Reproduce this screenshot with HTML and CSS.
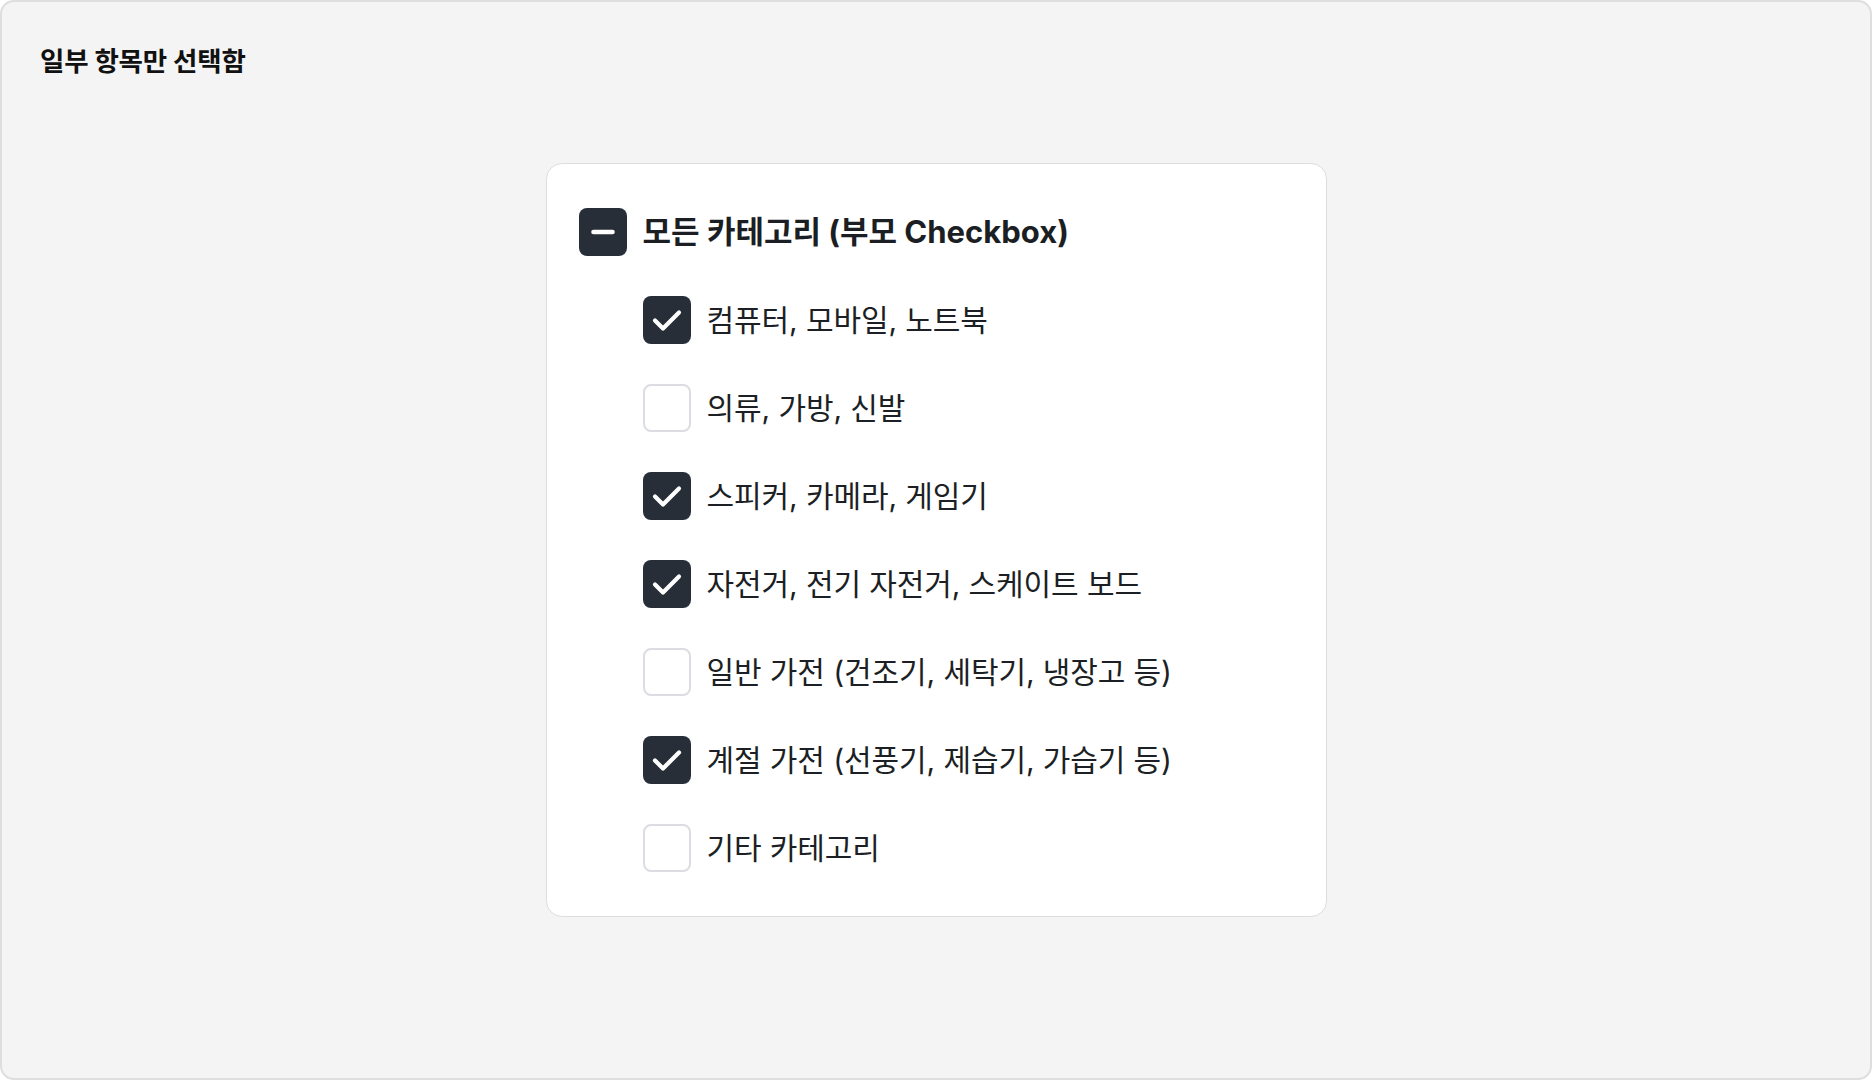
FILE: index.html
```html
<!DOCTYPE html>
<html lang="ko">
<head>
<meta charset="utf-8">
<title>일부 항목만 선택함</title>
<link rel="stylesheet" href="styles.css">
</head>
<body>
<div class="frame">
  <h1 class="title">일부 항목만 선택함</h1>
  <div class="card">
    <div class="row parent">
      <span class="box checked" aria-checked="mixed">
        <svg viewBox="0 0 48 48" width="48" height="48"><path d="M14.5 24 H33.5" /></svg>
      </span>
      <span class="label">모든 카테고리 (부모 Checkbox)</span>
    </div>
    <div class="children">
      <div class="row">
        <span class="box checked"><svg viewBox="0 0 48 48" width="48" height="48"><path d="M12 24.5 L20 32.5 L36 16.5" /></svg></span>
        <span class="label">컴퓨터, 모바일, 노트북</span>
      </div>
      <div class="row">
        <span class="box"></span>
        <span class="label">의류, 가방, 신발</span>
      </div>
      <div class="row">
        <span class="box checked"><svg viewBox="0 0 48 48" width="48" height="48"><path d="M12 24.5 L20 32.5 L36 16.5" /></svg></span>
        <span class="label">스피커, 카메라, 게임기</span>
      </div>
      <div class="row">
        <span class="box checked"><svg viewBox="0 0 48 48" width="48" height="48"><path d="M12 24.5 L20 32.5 L36 16.5" /></svg></span>
        <span class="label">자전거, 전기 자전거, 스케이트 보드</span>
      </div>
      <div class="row">
        <span class="box"></span>
        <span class="label">일반 가전 (건조기, 세탁기, 냉장고 등)</span>
      </div>
      <div class="row">
        <span class="box checked"><svg viewBox="0 0 48 48" width="48" height="48"><path d="M12 24.5 L20 32.5 L36 16.5" /></svg></span>
        <span class="label">계절 가전 (선풍기, 제습기, 가습기 등)</span>
      </div>
      <div class="row">
        <span class="box"></span>
        <span class="label">기타 카테고리</span>
      </div>
    </div>
  </div>
</div>
</body>
</html>
```
FILE: styles.css
```css
* { box-sizing: border-box; }
html, body { margin: 0; padding: 0; }
body {
  font-family: Inter, "Noto Sans CJK KR", sans-serif;
  background: #ffffff;
  color: #1f2329;
}
.frame {
  width: 1872px;
  height: 1080px;
  background: #f4f4f4;
  border: 2px solid #dedede;
  border-radius: 14px;
  padding: 39px 0 0 0;
  display: flex;
  flex-direction: column;
  align-items: center;
}
.title {
  align-self: flex-start;
  margin: 0 0 0 38px;
  font-size: 26.5px;
  line-height: 40px;
  font-weight: 700;
  color: #111111;
  letter-spacing: -0.2px;
}
.card {
  margin-top: 82px;
  width: 781px;
  background: #ffffff;
  border: 1px solid #dddddd;
  border-radius: 16px;
  padding: 44px 32px;
}
.row {
  display: flex;
  align-items: center;
  gap: 16px;
  height: 48px;
}
.children {
  margin-top: 40px;
  padding-left: 64px;
  display: flex;
  flex-direction: column;
  gap: 40px;
}
.box {
  flex: none;
  width: 48px;
  height: 48px;
  border-radius: 8px;
  border: 2px solid #dcdce2;
  background: #ffffff;
  display: flex;
}
.box.checked {
  border: none;
  background: #282e37;
}
.box svg {
  display: block;
  fill: none;
  stroke: #ffffff;
  stroke-width: 4.2;
  stroke-linecap: round;
  stroke-linejoin: round;
}
.parent .box svg { stroke-width: 4.6; }
.label {
  font-size: 30px;
  line-height: 48px;
  font-weight: 400;
  color: #1c1f24;
  letter-spacing: -0.1px;
}
.parent .label {
  font-size: 31px;
  font-weight: 700;
  color: #1b1e23;
  letter-spacing: 0;
}
```
